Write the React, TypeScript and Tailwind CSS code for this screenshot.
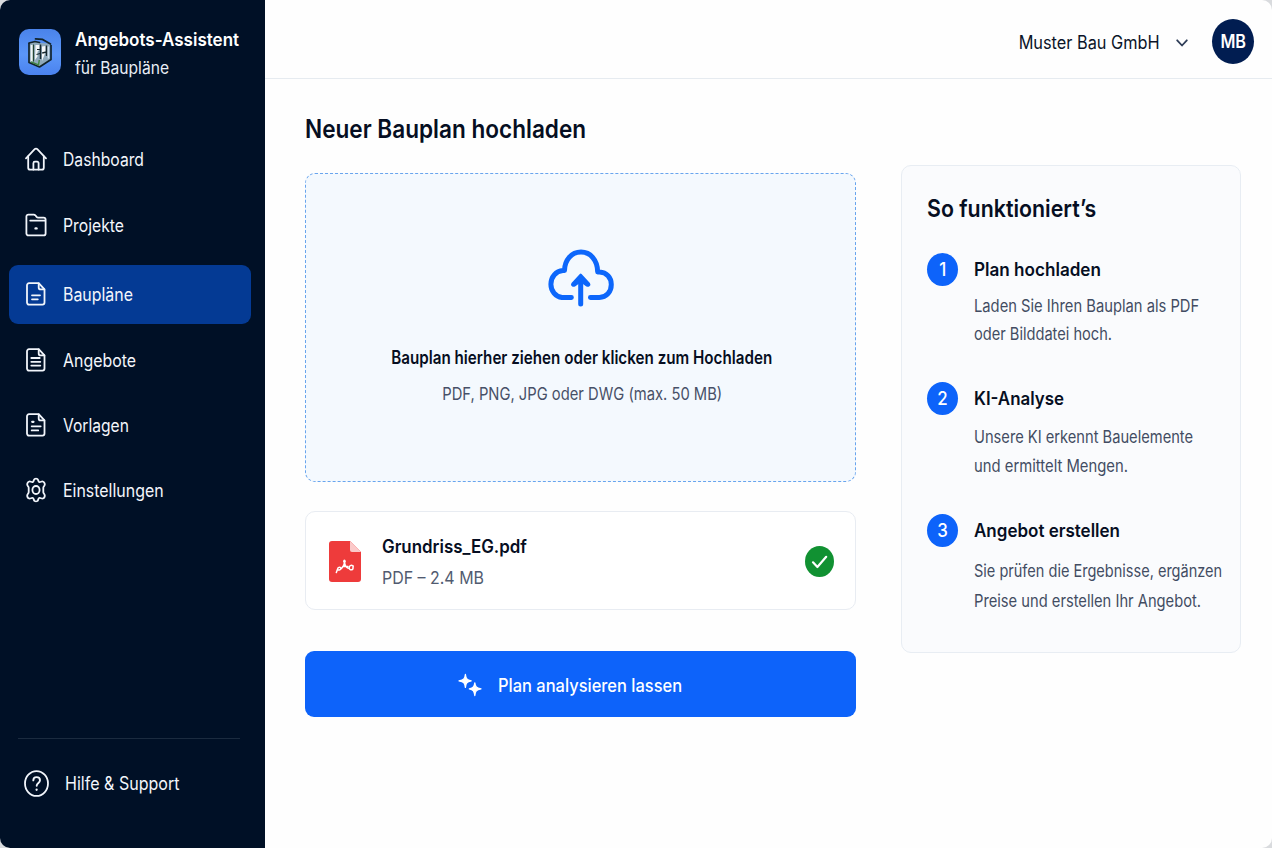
import type { ReactNode } from "react";

function T({ className = "", children }: { className?: string; children: ReactNode }) {
  return <span className={`inline-block whitespace-nowrap ${className}`}>{children}</span>;
}

function Icon({ children }: { children: ReactNode }) {
  return (
    <svg
      viewBox="0 0 24 26"
      className="mb-[2px] h-[26px] w-6 shrink-0"
      fill="none"
      stroke="#f1f5fb"
      strokeWidth="1.8"
      strokeLinecap="round"
      strokeLinejoin="round"
    >
      {children}
    </svg>
  );
}

const sheet = "M5 2.2h9.7l5.8 6.2v13.2a2 2 0 0 1-2 2H5a2 2 0 0 1-2-2V4.2a2 2 0 0 1 2-2z";
const fold = "M14.7 2.4v4a2 2 0 0 0 2 2h3.6";

const icons = {
  home: (
    <Icon>
      <path d="M2 12.3 10.7 3.2a1.8 1.8 0 0 1 2.6 0L22 12.3" />
      <path d="M4.2 10.3v11.4a2 2 0 0 0 2 2h11.6a2 2 0 0 0 2-2V10.3" />
      <path d="M9.4 23.5v-6.3a1.5 1.5 0 0 1 1.5-1.5h2.2a1.5 1.5 0 0 1 1.5 1.5v6.3" />
    </Icon>
  ),
  folder: (
    <Icon>
      <path d="M2.4 4.6a2 2 0 0 1 2-2h5.4a2 2 0 0 1 1.5.7l1.3 1.6a2 2 0 0 0 1.5.7h5.5a2 2 0 0 1 2 2v13.8a2 2 0 0 1-2 2H4.4a2 2 0 0 1-2-2z" />
      <path d="M6.2 8.6h15" />
      <path d="M11.6 16.4h.9" strokeWidth="2.4" />
    </Icon>
  ),
  plan: (
    <Icon>
      <path d={sheet} />
      <path d={fold} />
      <path d="M8 14.3h8M8 18.3h5.8" />
    </Icon>
  ),
  offer: (
    <Icon>
      <path d={sheet} />
      <path d={fold} />
      <path d="M7.3 11h8.4M7.3 14.8h9M7.3 18.6h9" />
    </Icon>
  ),
  template: (
    <Icon>
      <path d={sheet} />
      <path d={fold} />
      <path d="M8.2 9.8h1.3" strokeWidth="2.2" />
      <path d="M7.7 14.3h9M7.7 18.4h6.5" />
    </Icon>
  ),
  settings: (
    <Icon>
      <path d="M10.6 2c.9-.4 1.900-.4 2.800 0 .9.500.7 2.300 1.700 2.900 1 .700 2.500-.7 3.600-.4 1 .300 2.100 2 2.100 3.100 0 1.200-1.500 2-1.500 3.100v4.600c0 1.100 1.500 1.900 1.500 3.100 0 1.100-1.100 2.800-2.100 3.100-1.100.300-2.600-1.100-3.600-.4-1 .600-.8 2.400-1.700 2.900-.9.400-1.900.4-2.800 0-.9-.5-.7-2.300-1.700-2.900-1-.7-2.500.7-3.600.4-1-.3-2.100-2-2.100-3.100 0-1.200 1.500-2 1.500-3.100v-4.600c0-1.100-1.500-1.900-1.500-3.100 0-1.100 1.100-2.800 2.100-3.100 1.100-.3 2.600 1.100 3.600.4 1-.6.8-2.400 1.700-2.900z" />
      <ellipse cx="12" cy="13" rx="3.6" ry="4" />
    </Icon>
  ),
};

const nav = [
  { icon: icons.home, label: "Dashboard", scale: "scale-x-[0.872]", row: "mt-[49px]" },
  { icon: icons.folder, label: "Projekte", scale: "scale-x-[0.875]", row: "mt-[7px]" },
  { icon: icons.plan, label: "Baupläne", scale: "scale-x-[0.884]", row: "mt-[10px] bg-[#043a94]" },
  { icon: icons.offer, label: "Angebote", scale: "scale-x-[0.884]", row: "mt-[7px]" },
  { icon: icons.template, label: "Vorlagen", scale: "scale-x-[0.868]", row: "mt-[6px]" },
  { icon: icons.settings, label: "Einstellungen", scale: "scale-x-[0.885]", row: "mt-[6px]" },
];

function Logo() {
  return (
    <svg viewBox="0 0 42 46" className="mt-1 h-[46px] w-[42px] shrink-0">
      <defs>
        <linearGradient id="brand" x1="0" y1="0" x2="0" y2="1">
          <stop offset="0" stopColor="#4a83ea" />
          <stop offset="0.55" stopColor="#5b97f8" />
          <stop offset="1" stopColor="#4a82ee" />
        </linearGradient>
      </defs>
      <rect width="42" height="46" rx="10" fill="url(#brand)" />
      <path d="M10 14 16 12.500l4.500 1.500L31 14.500V31l-10.500 7L10 33.500z" fill="#8fa9ba" />
      <path d="M10 14v19.500L20.500 38 32 30.500V16" fill="none" stroke="#12242a" strokeWidth="1.700" strokeLinejoin="round" />
      <path d="M16.500 9.800l7 .6 8 4.600M10 14l6-1.500 4.500 1" fill="none" stroke="#12242a" strokeWidth="1.700" strokeLinecap="round" />
      <path d="M12.600 16v16.500" stroke="#f1f6f3" strokeWidth="1.900" />
      <path d="M14.500 15.500v17" stroke="#27452f" strokeWidth="1.100" />
      <path d="M16.500 16h4v4.500l-2 2.200v4.800l-2.500 3.500z" fill="#f4f7f8" />
      <path d="M21.500 15.500V30" stroke="#17272c" strokeWidth="1.500" />
      <path d="M23 17.500l3.400-.5v6.500L23 32z" fill="#f7f9fa" />
      <path d="M27.500 16.500v10.500M23.200 24l4.300-1" stroke="#17272c" strokeWidth="1.400" />
      <path d="M29.400 17.500V29.500" stroke="#cfe0ee" strokeWidth="1.500" />
      <path d="M18 20.500h3M17.500 25.500l3.500-1" stroke="#17272c" strokeWidth="1.200" />
      <path d="M12 32.800l7.500 3.200.8-5" fill="none" stroke="#3f8340" strokeWidth="1.400" />
    </svg>
  );
}

function Sidebar() {
  return (
    <aside className="flex w-[265px] shrink-0 flex-col bg-[#001026]">
      <div className="flex items-start pt-[25px] pl-[19px]">
        <Logo />
        <div className="mt-px ml-[14px] flex flex-col items-start">
          <T className="h-7 origin-left scale-x-[0.945] text-lg leading-7 font-semibold text-white">Angebots-Assistent</T>
          <T className="h-7 origin-left scale-x-[0.919] text-[17px] leading-7 text-[#e9eef6]">für Baupläne</T>
        </div>
      </div>
      <nav className="-mt-px flex flex-col pr-[14px] pl-[9px]">
        {nav.map((n) => (
          <a key={n.label} className={`flex h-[59px] items-center rounded-[9px] pl-[15px] ${n.row}`}>
            {n.icon}
            <T className={`ml-[15px] origin-left text-lg text-[#f3f6fb] ${n.scale}`}>{n.label}</T>
          </a>
        ))}
      </nav>
      <div className="mt-auto ml-[18px] w-[222px] border-t border-[#1b2b3f]" />
      <div className="flex h-[109px] items-start pt-[31px] pl-6">
        <svg viewBox="0 0 25 27" className="h-[27px] w-[25px]" fill="none" stroke="#f1f5fb" strokeLinecap="round" strokeLinejoin="round">
          <ellipse cx="12.5" cy="13.5" rx="11.5" ry="12.4" strokeWidth="1.8" />
          <path d="M9.300 10.400c0-2 1.400-3.300 3.300-3.300s3.400 1.300 3.400 3.200c0 2.600-3.300 2.700-3.300 5.500" strokeWidth="1.9" />
          <path d="M12.600 19.700v.1" strokeWidth="2.3" />
        </svg>
        <T className="ml-4 origin-left scale-x-[0.892] text-lg leading-[27px] text-[#f3f6fb]">Hilfe &amp; Support</T>
      </div>
    </aside>
  );
}

function Header() {
  return (
    <header className="flex h-[79px] shrink-0 items-start justify-end border-b border-[#e6ebf0] pt-[19px] pr-[18px]">
      <div className="flex items-center">
        <T className="mt-[2px] origin-right scale-x-[0.906] text-lg text-[#0b1428]">Muster Bau GmbH</T>
        <svg viewBox="0 0 12 8" className="mt-[2px] ml-4 h-2 w-3" fill="none" stroke="#2f3e58" strokeWidth="1.8" strokeLinecap="round" strokeLinejoin="round">
          <path d="M1.2 1.300 6 6.500l4.800-5.200" />
        </svg>
        <div className="ml-6 flex h-[45px] w-[42px] items-center justify-center rounded-[50%] bg-[#011d51]">
          <T className="mt-px scale-x-[0.9] text-lg font-semibold text-white">MB</T>
        </div>
      </div>
    </header>
  );
}

function DropZone() {
  return (
    <div className="mt-[25px] flex h-[309px] w-full flex-col items-center rounded-[10px] border border-dashed border-[#69a5ee] bg-[#f4f9fe]">
      <svg viewBox="0 0 66 58" className="mt-[75px] h-[58px] w-[66px]" fill="none" stroke="#0d67fb" strokeWidth="5" strokeLinecap="round" strokeLinejoin="round">
        <path d="M23.300 48.500H14C7.500 47.500 2.900 42 2.900 35.200c0-7.300 5-13.200 12-13.600h1.600C16.600 11 23.500 3.100 33 3.100S49.500 11 49.700 23h1.800c7 .4 11.800 5.300 11.800 12.500 0 7.200-4.800 13-12 13h-8.800" strokeLinecap="butt" />
        <path d="M23.300 48.500h.1M42.500 48.500h-.1" strokeWidth="4.900" />
        <path d="M32.700 55V32" />
        <path d="M32.700 25.800 41 34.800c.8 1.200-.7 2.500-2.300 1.400L35 33.500h-4.600l-3.700 2.700c-1.600 1.100-3.100-.2-2.300-1.400z" fill="#0d67fb" strokeWidth="2.400" />
      </svg>
      <T className="mt-[39px] ml-[2px] scale-x-[0.844] text-lg leading-6 font-semibold text-[#060e22]">
        Bauplan hierher ziehen oder klicken zum Hochladen
      </T>
      <T className="mt-[12px] ml-[3px] scale-x-[0.868] text-[17px] leading-6 text-[#475067]">PDF, PNG, JPG oder DWG (max. 50 MB)</T>
    </div>
  );
}

function FileCard() {
  return (
    <div className="mt-[29px] flex h-[99px] w-full items-center rounded-[10px] border border-[#e8ecf2] bg-white pr-[21px] pl-[23px]">
      <svg viewBox="0 0 32 41" className="mt-px h-[41px] w-8 shrink-0">
        <path d="M3 0h18l11 11v27a3 3 0 0 1-3 3H3a3 3 0 0 1-3-3V3a3 3 0 0 1 3-3z" fill="#ee3b3b" />
        <path d="M21 0l11 11H23a2 2 0 0 1-2-2z" fill="#fbc9c9" />
        <g fill="none" stroke="#fff" strokeWidth="1.5" strokeLinecap="round" strokeLinejoin="round">
          <path d="M7.3 31.500c1-2.800 1.500-4.500 2-4.900 2.400-.9 3.400 1 1.800 2-1 .6-2 .5-2.600.2M12.500 27.500c1.800-1.800 2.800-3.600 3-6M15.500 20v1c.3 3 1.500 5.500 3.800 6.200M15 25.600l4-.2" />
          <path d="M24 25c-1.800-1.400-3.800-.3-3.800 1.700 0 2.200 2.200 2.900 3.700 1.200l.3-2.900" />
        </g>
        <ellipse cx="15.400" cy="20.200" rx="1.300" ry="1.600" fill="#fff" />
      </svg>
      <div className="ml-[21px] flex flex-col items-start pt-[3px]">
        <T className="origin-left scale-x-[0.939] text-lg leading-[31px] font-semibold text-[#060e22]">Grundriss_EG.pdf</T>
        <T className="mt-px origin-left scale-x-[0.938] text-[17px] leading-[31px] text-[#515b70]">PDF – 2.4 MB</T>
      </div>
      <svg viewBox="0 0 29 31" className="mt-px ml-auto h-[31px] w-[29px]">
        <ellipse cx="14.5" cy="15.5" rx="14.500" ry="15.500" fill="#119132" />
        <path d="M8 16.300l4.400 4.700 8.800-10.200" fill="none" stroke="#fff" strokeWidth="2.200" strokeLinecap="round" strokeLinejoin="round" />
      </svg>
    </div>
  );
}

const steps = [
  {
    title: "Plan hochladen",
    scale: "scale-x-[0.95]",
    box: "mt-[28px]",
    body: "mt-[6px] leading-7",
    lines: [
      ["Laden Sie Ihren Bauplan als PDF", "scale-x-[0.867]"],
      ["oder Bilddatei hoch.", "scale-x-[0.86]"],
    ],
  },
  {
    title: "KI-Analyse",
    scale: "scale-x-[0.939]",
    box: "mt-[34px]",
    body: "mt-[8px] leading-[29px]",
    lines: [
      ["Unsere KI erkennt Bauelemente", "scale-x-[0.863]"],
      ["und ermittelt Mengen.", "scale-x-[0.872]"],
    ],
  },
  {
    title: "Angebot erstellen",
    scale: "scale-x-[0.944]",
    box: "mt-[33px]",
    body: "mt-[9px] leading-[30px]",
    lines: [
      ["Sie prüfen die Ergebnisse, ergänzen", "scale-x-[0.855]"],
      ["Preise und erstellen Ihr Angebot.", "scale-x-[0.865]"],
    ],
  },
];

function HowItWorks() {
  return (
    <section className="mt-[86px] ml-[45px] h-[488px] w-[340px] shrink-0 rounded-[10px] border border-[#e8edf3] bg-[#fafbfd] pt-[27px] pl-[25px]">
      <h2 className="flex h-8 items-center">
        <T className="origin-left scale-x-[0.89] text-2xl font-semibold text-[#060e22]">So funktioniert’s</T>
      </h2>
      {steps.map((s, i) => (
        <div key={s.title} className={`flex items-start ${s.box}`}>
          <div className="flex h-[33px] w-[31px] shrink-0 items-center justify-center rounded-[50%] bg-[#0d63fa]">
            <T className="scale-x-[0.94] text-lg font-medium text-white">{i + 1}</T>
          </div>
          <div className="ml-4 flex flex-col items-start">
            <T className={`h-[33px] origin-left text-lg leading-[33px] font-semibold text-[#060e22] ${s.scale}`}>{s.title}</T>
            <p className={`flex flex-col items-start text-[17px] text-[#424c62] ${s.body}`}>
              {s.lines.map(([text, scale]) => (
                <T key={text} className={`origin-left ${scale}`}>{text}</T>
              ))}
            </p>
          </div>
        </div>
      ))}
    </section>
  );
}

export default function App() {
  return (
    <div className="h-[848px] w-[1272px] overflow-hidden bg-[#d9dbde] font-['Inter',sans-serif]">
      <div className="flex h-full overflow-hidden rounded-[10px] bg-[#fefefe]">
        <Sidebar />
        <div className="flex min-w-0 flex-1 flex-col">
          <Header />
          <main className="flex flex-1 pl-10">
            <div className="flex w-[551px] shrink-0 flex-col items-start pt-[33px]">
              <h1 className="flex h-9 items-center">
                <T className="origin-left scale-x-[0.903] text-[25px] font-semibold text-[#060e22]">Neuer Bauplan hochladen</T>
              </h1>
              <DropZone />
              <FileCard />
              <button className="mt-[41px] flex h-[66px] w-full items-center rounded-[9px] bg-[#0d63fa] pl-[153px]">
                <svg viewBox="0 0 24 24" className="mt-px h-6 w-6 shrink-0" fill="#fff" stroke="#fff" strokeWidth="1.300" strokeLinejoin="round">
                  <path d="M7.400 1.500C7.900 5.800 8.800 7.100 13.200 7.900 8.800 8.700 7.900 10 7.400 14.300 6.900 10 6 8.700 1 7.900 6 7.100 6.900 5.800 7.400 1.500z" />
                  <path d="M16.800 9.800c.5 4 1.400 5.300 6.200 6.100-4.800.8-5.700 2.100-6.200 6.600-.5-4.500-1.400-5.800-5.500-6.600 4.100-.8 5-2.100 5.500-6.100z" />
                </svg>
                <T className="mt-[3px] ml-4 origin-left scale-x-[0.914] text-lg font-medium text-white">Plan analysieren lassen</T>
              </button>
            </div>
            <HowItWorks />
          </main>
        </div>
      </div>
    </div>
  );
}
